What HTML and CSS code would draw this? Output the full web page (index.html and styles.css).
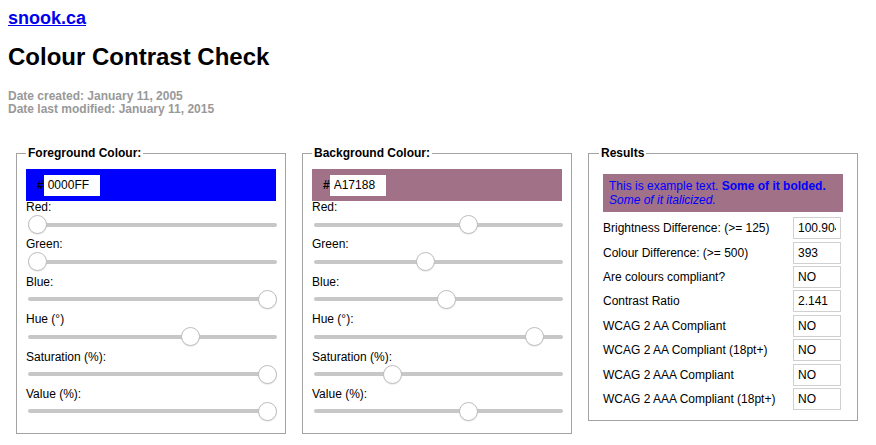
FILE: index.html
```html
<!DOCTYPE html>
<html lang="en">
<head>
  <meta charset="UTF-8">
  <title>Colour Contrast Check</title>
  <link rel="stylesheet" href="styles.css">
</head>
<body>
  <div class="site"><a href="#">snook.ca</a></div>

  <h1>Colour Contrast Check</h1>
  <p class="dates">
    Date created: January 11, 2005<br>
    Date last modified: January 11, 2015
  </p>

  <div class="panels">
    <fieldset class="picker">
      <legend>Foreground Colour:</legend>
      <div class="swatch fg"><b>#</b><input type="text" class="hex" value="0000FF"></div>
      <label>Red:</label>
      <input type="range" min="0" max="255" value="0">
      <label>Green:</label>
      <input type="range" min="0" max="255" value="0">
      <label>Blue:</label>
      <input type="range" min="0" max="255" value="255">
      <label>Hue (°)</label>
      <input type="range" min="0" max="360" value="240">
      <label>Saturation (%):</label>
      <input type="range" min="0" max="100" value="100">
      <label>Value (%):</label>
      <input type="range" min="0" max="100" value="100">
    </fieldset>

    <fieldset class="picker">
      <legend>Background Colour:</legend>
      <div class="swatch bg"><b>#</b><input type="text" class="hex" value="A17188"></div>
      <label>Red:</label>
      <input type="range" min="0" max="255" value="161">
      <label>Green:</label>
      <input type="range" min="0" max="255" value="113">
      <label>Blue:</label>
      <input type="range" min="0" max="255" value="136">
      <label>Hue (°):</label>
      <input type="range" min="0" max="360" value="331">
      <label>Saturation (%):</label>
      <input type="range" min="0" max="100" value="30">
      <label>Value (%):</label>
      <input type="range" min="0" max="100" value="63">
    </fieldset>

    <fieldset class="results">
      <legend>Results</legend>
      <div class="sample">
        This is example text. <strong>Some of it bolded.</strong><br>
        <em>Some of it italicized.</em>
      </div>
      <div class="rows">
        <span>Brightness Difference: (&gt;= 125)</span><input type="text" value="100.904">
        <span>Colour Difference: (&gt;= 500)</span><input type="text" value="393">
        <span>Are colours compliant?</span><input type="text" value="NO">
        <span>Contrast Ratio</span><input type="text" value="2.141">
        <span>WCAG 2 AA Compliant</span><input type="text" value="NO">
        <span>WCAG 2 AA Compliant (18pt+)</span><input type="text" value="NO">
        <span>WCAG 2 AAA Compliant</span><input type="text" value="NO">
        <span>WCAG 2 AAA Compliant (18pt+)</span><input type="text" value="NO">
      </div>
    </fieldset>
  </div>
</body>
</html>
```

FILE: styles.css
```css
body {
  margin: 8px;
  font-family: "Liberation Sans", Arial, sans-serif;
  font-size: 12px;
  color: #000;
  background: #fff;
}

.site {
  font-size: 18px;
  font-weight: bold;
}

.site a { color: #0000ee; }

h1 {
  font-size: 24px;
  margin: 14px 0 19px;
}

.dates {
  margin: 0;
  color: #999;
  font-weight: bold;
  line-height: 13px;
}

.panels {
  display: flex;
  align-items: flex-start;
  gap: 16px;
  margin: 30px 0 0 8px;
}

fieldset {
  box-sizing: border-box;
  width: 270px;
  min-width: 0;
  margin: 0;
  padding: 9px 9px 8px;
  border: 1px solid #a3a3a3;
}

legend {
  font-weight: bold;
  line-height: 14px;
  padding: 0 2px;
}

.swatch {
  display: flex;
  align-items: center;
  height: 32px;
  box-sizing: border-box;
  padding: 0 11px;
}

.swatch.fg { background: #0000ff; }
.swatch.bg { background: #a17188; }

.swatch b { font-size: 12px; }

.hex {
  box-sizing: border-box;
  width: 56px;
  height: 21px;
  margin: 0;
  padding: 0 4px;
  border: none;
  background: #fff;
  font: 12px "Liberation Sans", Arial, sans-serif;
  color: #000;
}

.picker label {
  display: block;
  line-height: 13px;
}

input[type=range] {
  -webkit-appearance: none;
  appearance: none;
  display: block;
  width: 249px;
  height: 21px;
  margin: 0 0 3.4px 2px;
  background: transparent;
}

input[type=range]::-webkit-slider-runnable-track {
  height: 4px;
  background: #c7c7c7;
  border-radius: 2px;
}

input[type=range]::-webkit-slider-thumb {
  -webkit-appearance: none;
  width: 19px;
  height: 19px;
  margin-top: -7.5px;
  border-radius: 50%;
  background: #fff;
  border: 1px solid #bdbdbd;
  box-shadow: 0 1px 1px rgba(0,0,0,0.08);
}

.results {
  padding: 14px 14px 9px;
}

.results legend { margin-left: -4px; }

.sample {
  background: #a17188;
  color: #0000ff;
  line-height: 14px;
  padding: 5px 6px;
  margin-bottom: 4px;
}

.rows {
  display: grid;
  grid-template-columns: 1fr 48px;
  grid-auto-rows: 24.4px;
  align-items: center;
  padding-right: 2px;
}

.rows input {
  box-sizing: border-box;
  width: 48px;
  height: 22px;
  margin: 0;
  padding: 0 4px;
  border: 1px solid #d0d0d0;
  font: 12px "Liberation Sans", Arial, sans-serif;
  color: #000;
}
```
